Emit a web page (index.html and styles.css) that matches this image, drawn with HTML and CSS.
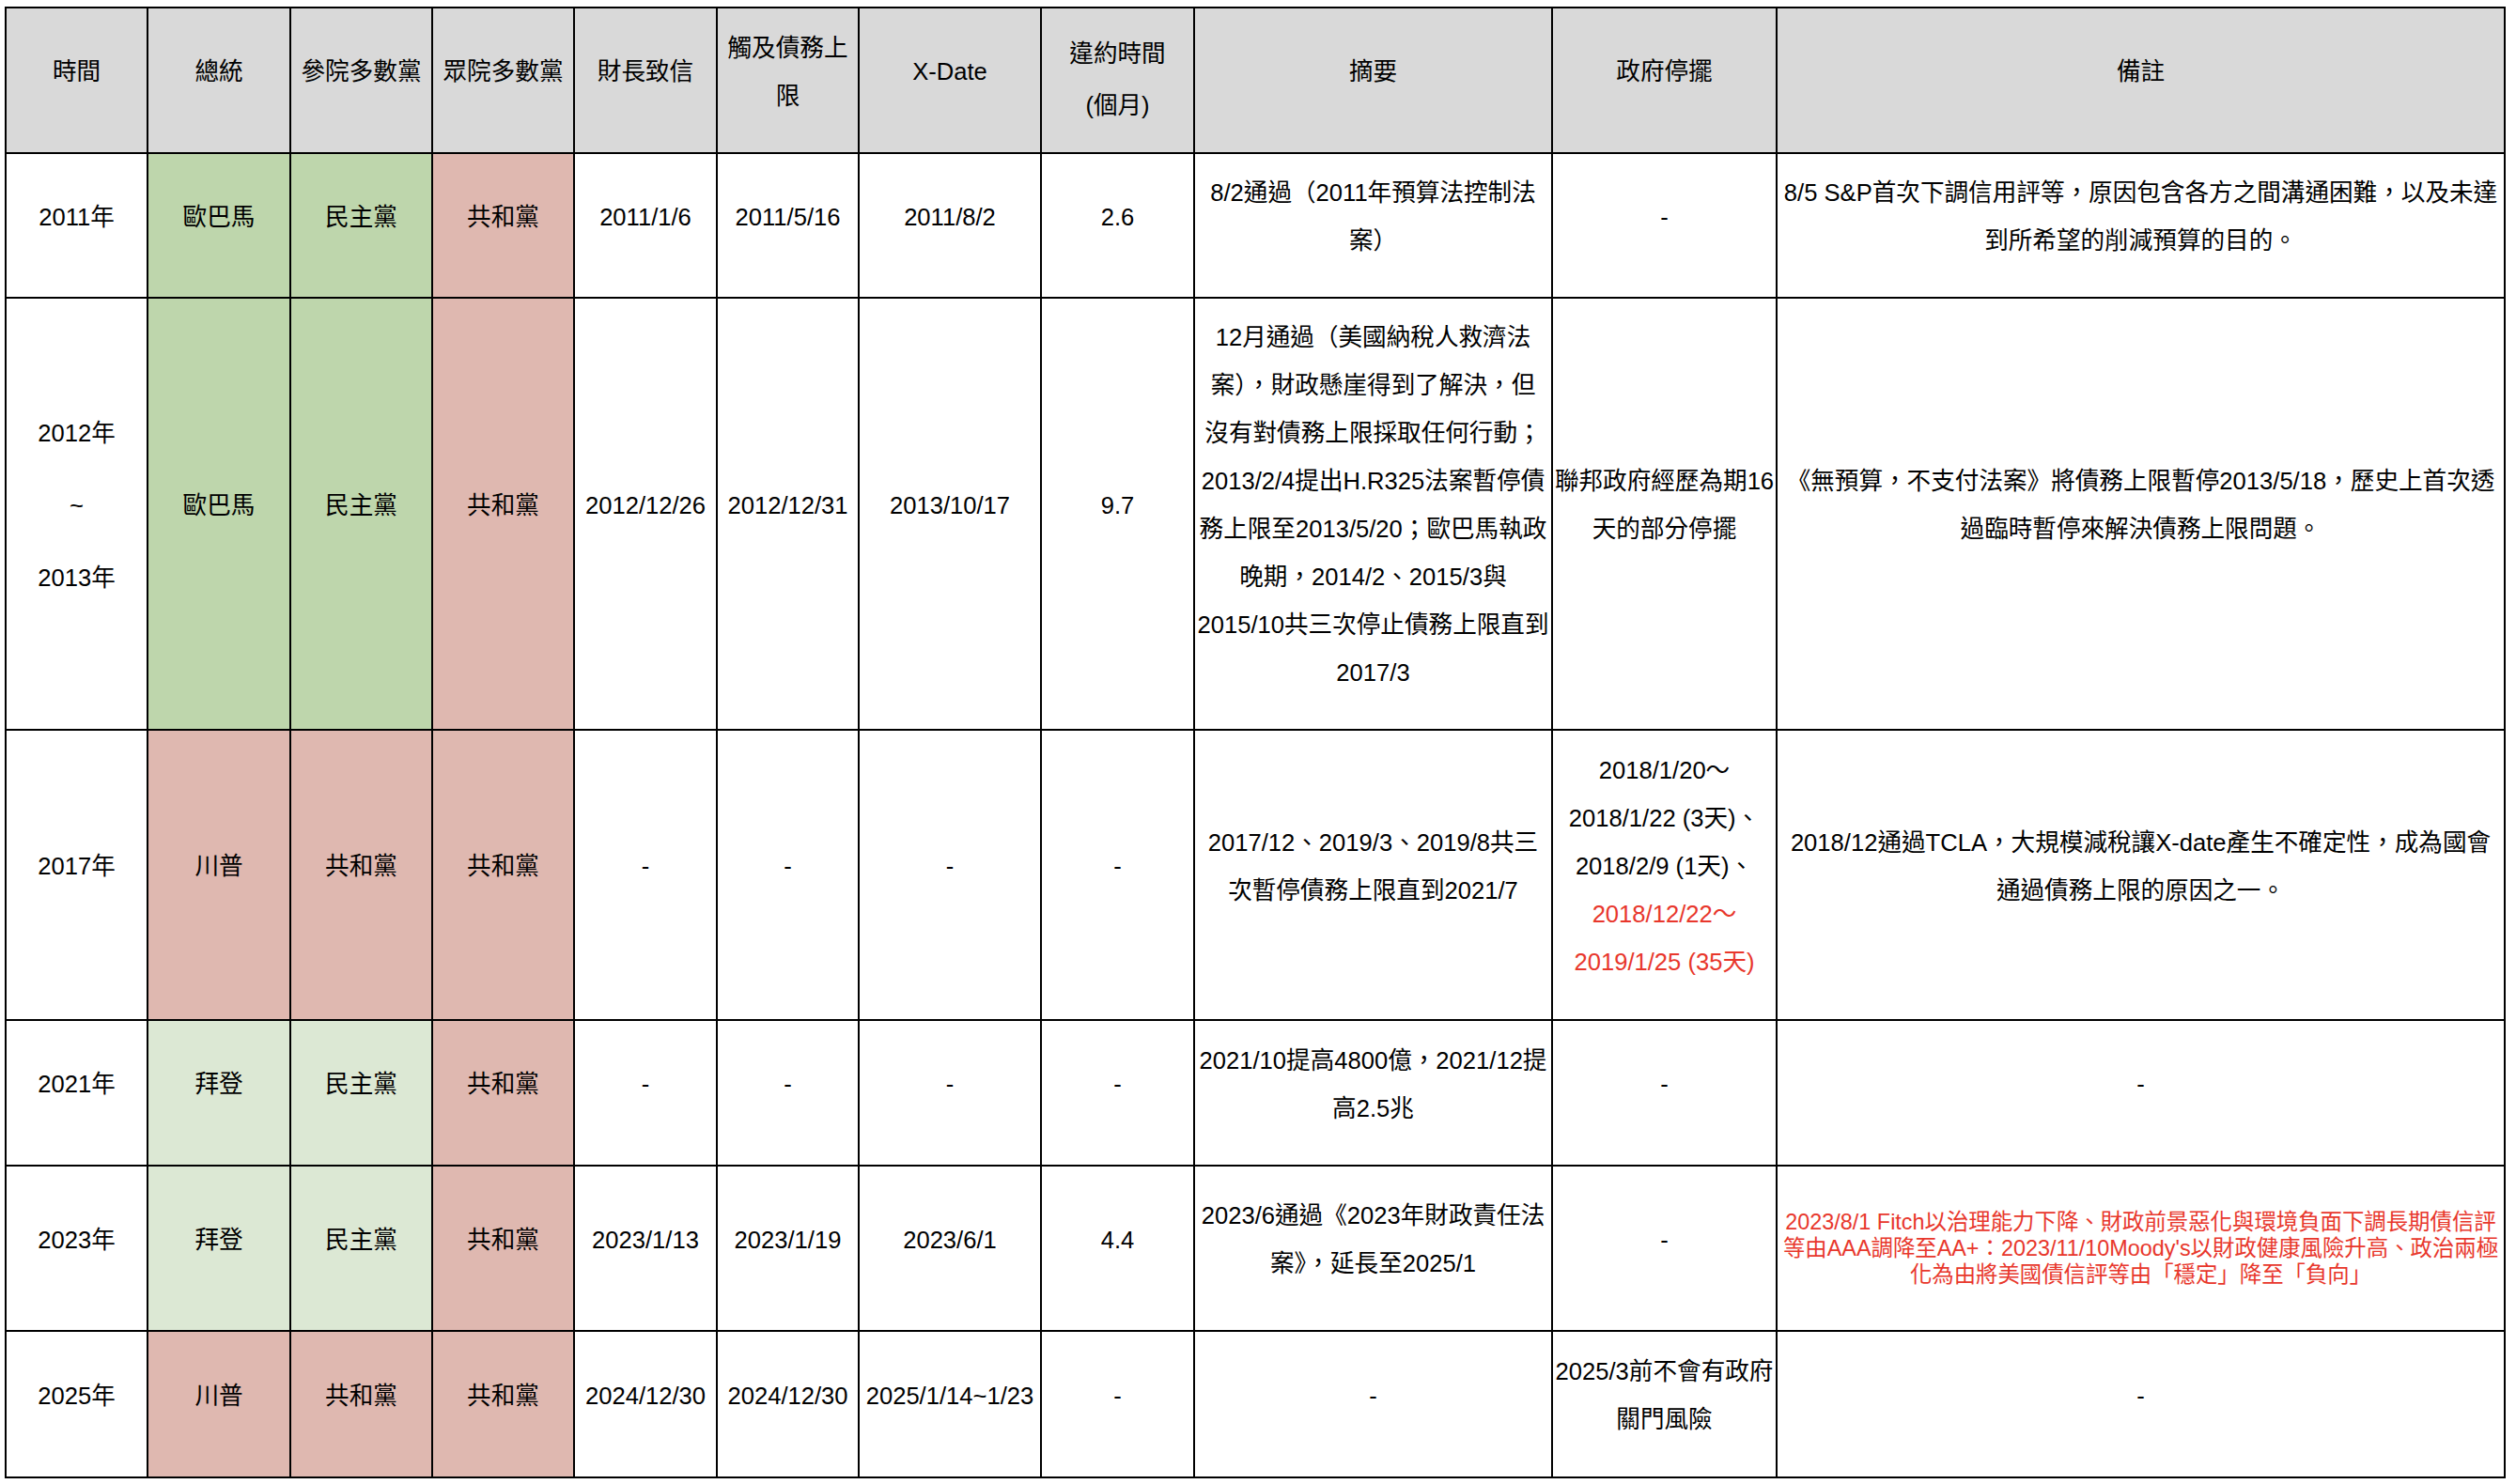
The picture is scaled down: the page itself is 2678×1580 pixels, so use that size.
FILE: index.html
```html
<!DOCTYPE html>
<html lang="zh-Hant">
<head>
<meta charset="utf-8">
<title>債務上限歷史</title>
<link rel="stylesheet" href="styles.css">
</head>
<body>
<div class="sheet">
  <div class="c h">時間</div>
  <div class="c h">總統</div>
  <div class="c h">參院多數黨</div>
  <div class="c h">眾院多數黨</div>
  <div class="c h">財長致信</div>
  <div class="c h">觸及債務上<br>限</div>
  <div class="c h">X-Date</div>
  <div class="c h h-tall">違約時間<br>(個月)</div>
  <div class="c h">摘要</div>
  <div class="c h">政府停擺</div>
  <div class="c h">備註</div>

  <div class="c">2011年</div>
  <div class="c dem">歐巴馬</div>
  <div class="c dem">民主黨</div>
  <div class="c rep">共和黨</div>
  <div class="c">2011/1/6</div>
  <div class="c">2011/5/16</div>
  <div class="c">2011/8/2</div>
  <div class="c">2.6</div>
  <div class="c">8/2通過（2011年預算法控制法<br>案）</div>
  <div class="c">-</div>
  <div class="c">8/5 S&amp;P首次下調信用評等，原因包含各方之間溝通困難，以及未達<br>到所希望的削減預算的目的。</div>

  <div class="c span-years">2012年<br>~<br>2013年</div>
  <div class="c dem">歐巴馬</div>
  <div class="c dem">民主黨</div>
  <div class="c rep">共和黨</div>
  <div class="c">2012/12/26</div>
  <div class="c">2012/12/31</div>
  <div class="c">2013/10/17</div>
  <div class="c">9.7</div>
  <div class="c">12月通過（美國納稅人救濟法<br>案），財政懸崖得到了解決，但<br>沒有對債務上限採取任何行動；<br>2013/2/4提出H.R325法案暫停債<br>務上限至2013/5/20；歐巴馬執政<br>晚期，2014/2、2015/3與<br>2015/10共三次停止債務上限直到<br>2017/3</div>
  <div class="c">聯邦政府經歷為期16<br>天的部分停擺</div>
  <div class="c">《無預算，不支付法案》將債務上限暫停2013/5/18，歷史上首次透<br>過臨時暫停來解決債務上限問題。</div>

  <div class="c">2017年</div>
  <div class="c rep">川普</div>
  <div class="c rep">共和黨</div>
  <div class="c rep">共和黨</div>
  <div class="c">-</div>
  <div class="c">-</div>
  <div class="c">-</div>
  <div class="c">-</div>
  <div class="c">2017/12、2019/3、2019/8共三<br>次暫停債務上限直到2021/7</div>
  <div class="c"><div class="lines">2018/1/20～<br>2018/1/22 (3天)、<br>2018/2/9 (1天)、<br><span class="red">2018/12/22～</span><br><span class="red">2019/1/25 (35天)</span></div></div>
  <div class="c">2018/12通過TCLA，大規模減稅讓X-date產生不確定性，成為國會<br>通過債務上限的原因之一。</div>

  <div class="c">2021年</div>
  <div class="c dem-lt">拜登</div>
  <div class="c dem-lt">民主黨</div>
  <div class="c rep">共和黨</div>
  <div class="c">-</div>
  <div class="c">-</div>
  <div class="c">-</div>
  <div class="c">-</div>
  <div class="c">2021/10提高4800億，2021/12提<br>高2.5兆</div>
  <div class="c">-</div>
  <div class="c">-</div>

  <div class="c">2023年</div>
  <div class="c dem-lt">拜登</div>
  <div class="c dem-lt">民主黨</div>
  <div class="c rep">共和黨</div>
  <div class="c">2023/1/13</div>
  <div class="c">2023/1/19</div>
  <div class="c">2023/6/1</div>
  <div class="c">4.4</div>
  <div class="c">2023/6通過《2023年財政責任法<br>案》，延長至2025/1</div>
  <div class="c">-</div>
  <div class="c note-red">2023/8/1 Fitch以治理能力下降、財政前景惡化與環境負面下調長期債信評<br>等由AAA調降至AA+：2023/11/10Moody's以財政健康風險升高、政治兩極<br>化為由將美國債信評等由「穩定」降至「負向」</div>

  <div class="c">2025年</div>
  <div class="c rep">川普</div>
  <div class="c rep">共和黨</div>
  <div class="c rep">共和黨</div>
  <div class="c">2024/12/30</div>
  <div class="c">2024/12/30</div>
  <div class="c">2025/1/14~1/23</div>
  <div class="c">-</div>
  <div class="c">-</div>
  <div class="c">2025/3前不會有政府<br>關門風險</div>
  <div class="c">-</div>
</div>
</body>
</html>
```

FILE: styles.css
```css
* {
  box-sizing: border-box;
}

html, body {
  margin: 0;
  padding: 0;
  background: #ffffff;
}

body {
  font-family: "Liberation Sans", "Noto Sans CJK TC", sans-serif;
  font-size: 25.6px;
  color: #000000;
}

.sheet {
  display: grid;
  grid-template-columns: 151px 152px 151px 151px 152px 151px 194px 163px 381px 239px 775px;
  grid-template-rows: 155px 154px 460px 309px 155px 176px 156px;
  width: max-content;
  margin: 7px 0 0 5px;
  border-top: 2px solid #000;
  border-left: 2px solid #000;
}

.c {
  display: flex;
  align-items: center;
  justify-content: center;
  text-align: center;
  white-space: nowrap;
  line-height: 51px;
  padding: 0 0 18px 0;
  border-right: 2px solid #000;
  border-bottom: 2px solid #000;
  background: #ffffff;
}

.lines {
  text-align: center;
}

.h {
  background: #d9d9d9;
}

.h-tall {
  line-height: 55px;
  padding-bottom: 2px;
}

.dem {
  background: #bed6ac;
}

.dem-lt {
  background: #dce8d4;
}

.rep {
  background: #dfb8b0;
}

.span-years {
  line-height: 77px;
}

.red {
  color: #e8372c;
}

.note-red {
  color: #e8372c;
  font-size: 23.4px;
  line-height: 28px;
  padding: 0;
}
```
